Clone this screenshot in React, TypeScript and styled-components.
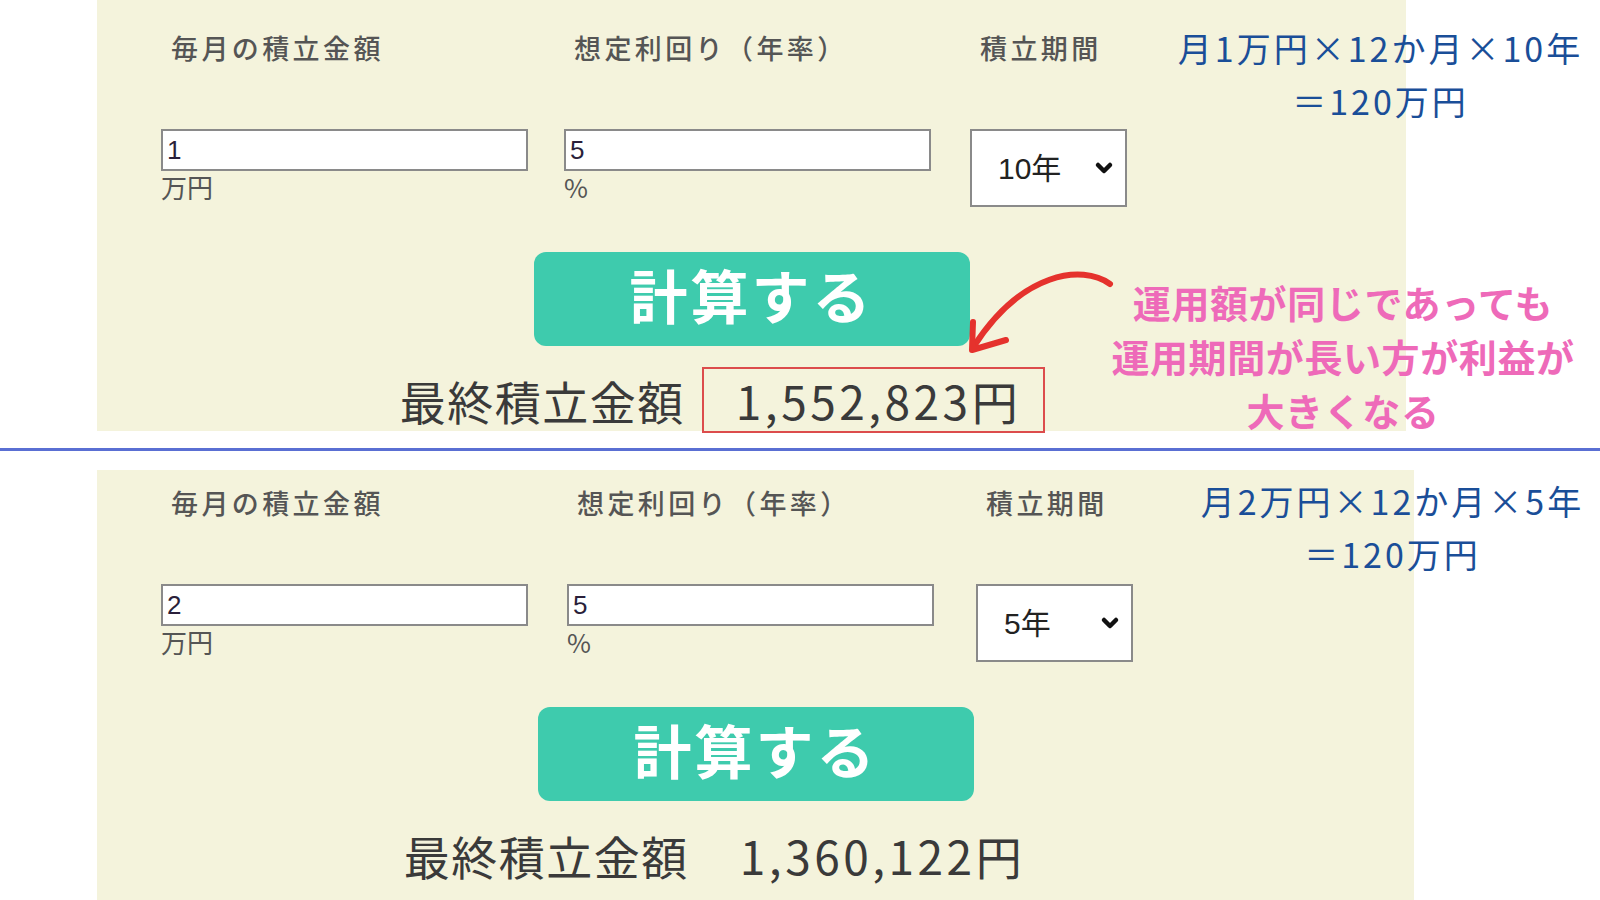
import React from "react";
import styled, { createGlobalStyle } from "styled-components";
import { ChevronDown } from "lucide-react";

const GlobalStyle = createGlobalStyle`
  body {
    margin: 0;
    background: #ffffff;
    font-family: "Noto Sans CJK JP", "Noto Sans", sans-serif;
    overflow: hidden;
  }
`;

type Scenario = {
  amount: string;
  rate: string;
  years: string;
  result: string;
  highlight: boolean;
  padTop: number;
  width: number;
  cols: string;
  noteTop: number;
  noteLeft: number;
  note: string[];
};

const scenarios: Scenario[] = [
  {
    amount: "1",
    rate: "5",
    years: "10年",
    result: "1,552,823円",
    highlight: true,
    padTop: 31,
    width: 1309,
    cols: "403px 406px auto",
    noteTop: 21,
    noteLeft: 1168,
    note: ["月1万円×12か月×10年", "＝120万円"],
  },
  {
    amount: "2",
    rate: "5",
    years: "5年",
    result: "1,360,122円",
    highlight: false,
    padTop: 16,
    width: 1317,
    cols: "406px 409px auto",
    noteTop: 4,
    noteLeft: 1180,
    note: ["月2万円×12か月×5年", "＝120万円"],
  },
];

const Calculator = ({ s }: { s: Scenario }) => (
  <Panel $padTop={s.padTop} $width={s.width}>
    <Row $cols={s.cols}>
      <Label>毎月の積立金額</Label>
      <Label>想定利回り（年率）</Label>
      <Label>積立期間</Label>
    </Row>
    <FieldRow $cols={s.cols}>
      <Field>
        <TextInput defaultValue={s.amount} />
        <Unit>万円</Unit>
      </Field>
      <Field>
        <TextInput defaultValue={s.rate} />
        <Unit>%</Unit>
      </Field>
      <SelectWrap>
        <Select defaultValue={s.years}>
          <option>{s.years}</option>
        </Select>
        <Chevron>
          <ChevronDown size={24} strokeWidth={4.5} />
        </Chevron>
      </SelectWrap>
    </FieldRow>
    <CalcButton>計算する</CalcButton>
    <ResultRow>
      <ResultLabel>最終積立金額</ResultLabel>
      <ResultValue $highlight={s.highlight}>{s.result}</ResultValue>
    </ResultRow>
  </Panel>
);

export default function App() {
  return (
    <>
      <GlobalStyle />
      <Page>
        <Section>
          <Calculator s={scenarios[0]} />
          <Note $top={scenarios[0].noteTop} $left={scenarios[0].noteLeft}>
            {scenarios[0].note.map((l) => (
              <div key={l}>{l}</div>
            ))}
          </Note>
          <Arrow width="160" height="100" viewBox="0 0 160 100">
            <path
              d="M150 24 C122 4, 62 12, 14 86"
              fill="none"
              stroke="#e5322d"
              strokeWidth="6"
              strokeLinecap="round"
            />
            <path
              d="M13 62 L12 90 L46 80"
              fill="none"
              stroke="#e5322d"
              strokeWidth="6"
              strokeLinecap="round"
              strokeLinejoin="round"
            />
          </Arrow>
          <Callout>
            <div>運用額が同じであっても</div>
            <div>運用期間が長い方が利益が</div>
            <div>大きくなる</div>
          </Callout>
        </Section>
        <Divider />
        <Section>
          <Calculator s={scenarios[1]} />
          <Note $top={scenarios[1].noteTop} $left={scenarios[1].noteLeft}>
            {scenarios[1].note.map((l) => (
              <div key={l}>{l}</div>
            ))}
          </Note>
        </Section>
      </Page>
    </>
  );
}

const Page = styled.div`
  width: 1600px;
  height: 900px;
  overflow: hidden;
`;

const Section = styled.section`
  position: relative;
`;

const Panel = styled.div<{ $padTop: number; $width: number }>`
  margin-left: 97px;
  width: ${(p) => p.$width}px;
  height: 431px;
  box-sizing: border-box;
  padding: ${(p) => p.$padTop}px 64px 0 64px;
  background: #f4f3dc;
  display: flex;
  flex-direction: column;
`;

const Row = styled.div<{ $cols: string }>`
  display: grid;
  grid-template-columns: ${(p) => p.$cols};
`;

const Label = styled.div`
  padding-left: 10px;
  font-size: 27px;
  line-height: 34px;
  letter-spacing: 3.4px;
  font-weight: 500;
  color: #555555;
`;

const FieldRow = styled(Row)`
  margin-top: 64px;
  align-items: start;
`;

const Field = styled.div`
  display: flex;
  flex-direction: column;
`;

const TextInput = styled.input`
  width: 367px;
  height: 42px;
  box-sizing: border-box;
  border: 2px solid #8a8a8a;
  background: #ffffff;
  padding: 0 4px;
  font-family: "Liberation Sans", sans-serif;
  font-size: 26px;
  color: #2a1f3a;
  outline: none;
`;

const Unit = styled.span`
  font-size: 26px;
  line-height: 32px;
  color: #555555;
`;

const SelectWrap = styled.div`
  position: relative;
  width: 157px;
  height: 78px;
`;

const Select = styled.select`
  appearance: none;
  width: 100%;
  height: 100%;
  box-sizing: border-box;
  border: 2px solid #8a8a8a;
  border-radius: 0;
  background: #ffffff;
  padding: 0 0 0 26px;
  font-family: "Liberation Sans", "Noto Sans CJK JP", sans-serif;
  font-size: 30px;
  color: #222222;
  outline: none;
`;

const Chevron = styled.span`
  position: absolute;
  right: 11px;
  top: 27px;
  color: #111111;
  pointer-events: none;
  display: flex;
`;

const CalcButton = styled.button`
  align-self: center;
  margin-top: 45px;
  width: 436px;
  height: 94px;
  border: none;
  border-radius: 12px;
  background: #3ecbad;
  color: #ffffff;
  padding: 0 0 10px;
  font-family: "Noto Sans CJK JP", sans-serif;
  font-size: 58px;
  font-weight: 700;
  letter-spacing: 3px;
  cursor: pointer;
`;

const ResultRow = styled.div`
  margin-top: 21px;
  padding-right: 58px;
  display: flex;
  justify-content: center;
  align-items: center;
  gap: 17px;
  color: #3a3a3a;
`;

const ResultLabel = styled.span`
  font-size: 46px;
  letter-spacing: 1.5px;
`;

const ResultValue = styled.span<{ $highlight: boolean }>`
  height: 66px;
  box-sizing: border-box;
  display: flex;
  align-items: center;
  padding: 0 22px 0 32px;
  border: 2px solid ${(p) => (p.$highlight ? "#dc4c4c" : "transparent")};
  font-size: 46px;
  letter-spacing: 3.5px;
`;

const Divider = styled.hr`
  margin: 17px 0 19px;
  border: none;
  height: 3px;
  background: #5a6fd3;
`;

const Note = styled.div<{ $top: number; $left: number }>`
  position: absolute;
  top: ${(p) => p.$top}px;
  left: ${(p) => p.$left}px;
  width: 425px;
  text-align: center;
  font-size: 34px;
  line-height: 53px;
  letter-spacing: 3px;
  color: #1a4e98;
  white-space: nowrap;
`;

const Callout = styled.div`
  position: absolute;
  top: 275px;
  left: 1100px;
  width: 486px;
  text-align: center;
  font-size: 38px;
  font-weight: 700;
  line-height: 54px;
  letter-spacing: 0.6px;
  color: #ee6ab9;
  white-space: nowrap;
`;

const Arrow = styled.svg`
  position: absolute;
  left: 960px;
  top: 260px;
`;
